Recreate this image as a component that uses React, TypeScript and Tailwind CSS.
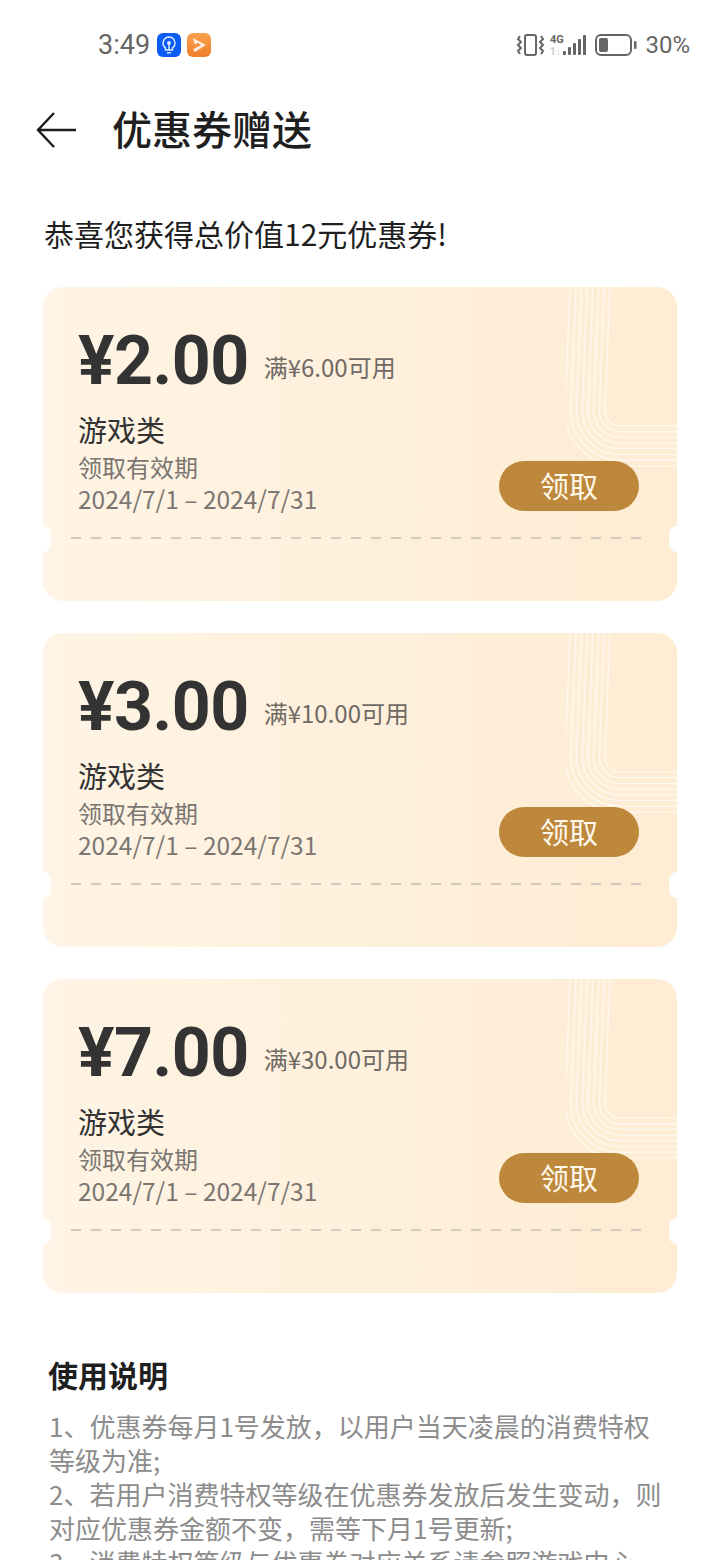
const coupons = [
  { amount: '¥2.00', limit: '满¥6.00可用' },
  { amount: '¥3.00', limit: '满¥10.00可用' },
  { amount: '¥7.00', limit: '满¥30.00可用' },
];

// concentric corner curves, innermost first
const curveRadii = [15, 20.7, 26.4, 32.1, 37.8, 43.5, 49.2, 55];

function CouponLines() {
  return (
    <svg className="absolute right-0 top-0" width="111" height="185" viewBox="0 0 111 185" fill="none">
      {curveRadii.map((r) => {
        const x = 54 - r;
        const hy = 124 + r;
        return (
          <path
            key={r}
            d={`M${x + 5} 0 L${x} 124 A${r} ${r} 0 0 0 54 ${hy} L111 ${hy}`}
            stroke="#fffaf2"
            strokeWidth="1.2"
          />
        );
      })}
    </svg>
  );
}

function Notch({ side }: { side: 'left' | 'right' }) {
  return (
    <div
      className={
        side === 'left'
          ? 'absolute left-0 top-[239px] h-[26px] w-[8px] rounded-r-[8px] bg-white'
          : 'absolute right-0 top-[239px] h-[26px] w-[8px] rounded-l-[8px] bg-white'
      }
    />
  );
}

function CouponCard({ amount, limit }: { amount: string; limit: string }) {
  return (
    <div className="relative h-[314px] overflow-hidden rounded-[20px] bg-gradient-to-r from-[#fff4e5] to-[#feecd3]">
      <CouponLines />
      <Notch side="left" />
      <Notch side="right" />
      <div className="relative flex flex-col px-[35px] pt-[36px]">
        <div className="flex items-center gap-[15px]">
          <span className="font-['Roboto',sans-serif] text-[68px] font-bold leading-[76px] tracking-[-0.5px] text-[#333333]">{amount}</span>
          <span className="mt-[11px] text-[24px] leading-[32px] text-[#6f6a65]">{limit}</span>
        </div>
        <div className="mt-[10px] text-[29px] leading-[40px] text-[#333333]">游戏类</div>
        <div className="relative mt-[2px]">
          <div className="flex flex-col">
            <span className="text-[24px] leading-[32px] text-[#7b7671]">领取有效期</span>
            <span className="text-[24.5px] leading-[32px] text-[#7b7671]">2024/7/1 – 2024/7/31</span>
          </div>
          <button className="absolute right-[3px] top-[10px] h-[50px] w-[140px] rounded-full bg-[#bd883b] text-[29px] text-[#fff8ec]">领取</button>
        </div>
        <div className="ml-[-7px] mr-[1px] mt-[22px] h-[2px] bg-[repeating-linear-gradient(90deg,#d3c9ba_0_10px,transparent_10px_20px)]" />
      </div>
    </div>
  );
}

export default function App() {
  return (
    <div className="h-[1560px] w-[720px] overflow-hidden bg-white font-['Noto_Sans_CJK_SC',sans-serif]">
      {/* status bar */}
      <div className="flex h-[90px] items-center justify-between pl-[98px] pr-[30px]">
        <div className="flex items-center">
          <span className="font-['Roboto',sans-serif] text-[27px] text-[#666666]">3:49</span>
          <div className="ml-[7px] flex h-[24px] w-[24px] items-center justify-center rounded-[6px] bg-[#0a5cf5]">
            <svg width="18" height="20" viewBox="0 0 18 20" fill="none" stroke="#dbe8ff" strokeWidth="1.5">
              <path d="M9 2a6 6 0 0 0-3.5 10.8V15h7v-2.2A6 6 0 0 0 9 2z" />
              <path d="M7 17.8h4" />
              <circle cx="9" cy="8" r="1.2" fill="#dbe8ff" />
              <path d="M9 9v6" />
            </svg>
          </div>
          <div className="ml-[6px] flex h-[24px] w-[24px] items-center justify-center rounded-[6px] bg-gradient-to-b from-[#f9a04e] to-[#f07f2a]">
            <svg width="18" height="18" viewBox="0 0 18 18" fill="#ffeadb">
              <path d="M3 2l13 7-11 7-2-2.5 7-4.5-6-1.5z" />
              <path d="M7 6.5l4 2.5-4 2z" fill="#f38a34" />
            </svg>
          </div>
        </div>
        <div className="flex items-center text-[#666666]">
          <svg width="30" height="24" viewBox="0 0 30 24" fill="none" stroke="#666666" strokeWidth="2">
            <rect x="9" y="2" width="11" height="20" rx="2" />
            <path d="M4 3L2 6l3 3-3 3 3 3-3 3 2 3M25 3l2 3-3 3 3 3-3 3 3 3-2 3" />
          </svg>
          <svg className="ml-[3px]" width="40" height="24" viewBox="0 0 40 24" fill="#666666">
            <text x="1" y="10" fontSize="11" fontWeight="700" fontFamily="Roboto, sans-serif">4G</text>
            <text x="1" y="22" fontSize="10" fontWeight="700" fontFamily="Roboto, sans-serif" fill="#cccccc">1↓</text>
            <rect x="14" y="18" width="3" height="4" rx="1" />
            <rect x="19" y="14" width="3" height="8" rx="1" />
            <rect x="24" y="10" width="3" height="12" rx="1" />
            <rect x="29" y="6" width="3" height="16" rx="1" />
            <rect x="34" y="2" width="3" height="20" rx="1" />
          </svg>
          <svg className="ml-[6px]" width="42" height="24" viewBox="0 0 42 24" fill="none">
            <rect x="1" y="2" width="35" height="20" rx="5" stroke="#666666" strokeWidth="2" />
            <rect x="4" y="5" width="9" height="14" rx="2" fill="#666666" />
            <rect x="39" y="8" width="2.5" height="8" rx="1" fill="#666666" />
          </svg>
          <span className="ml-[8px] font-['Roboto',sans-serif] text-[24px]">30%</span>
        </div>
      </div>

      {/* header */}
      <div className="flex h-[80px] items-center pl-[36px]">
        <svg width="40" height="38" viewBox="0 0 40 38" fill="none" stroke="#1c1c1c" strokeWidth="2.4">
          <path d="M18 2L2 19l16 17M2 19h38" />
        </svg>
        <h1 className="mb-[4px] ml-[36px] text-[40px] font-medium text-[#1f1f1f]">优惠券赠送</h1>
      </div>

      <p className="mt-[41px] pl-[44px] text-[30px] leading-[44px] text-[#1f1f1f]">恭喜您获得总价值12元优惠券!</p>

      <div className="mx-[43px] mt-[32px] flex flex-col gap-[32px]">
        {coupons.map((c) => (
          <CouponCard key={c.amount} amount={c.amount} limit={c.limit} />
        ))}
      </div>

      <div className="mt-[56px] px-[48px]">
        <h2 className="text-[30px] font-bold leading-[50px] text-[#1f1f1f]">使用说明</h2>
        <p className="ml-[1px] mt-[10px] text-[26px] leading-[34px] text-[#8c8c8c]">
          1、优惠券每月1号发放，以用户当天凌晨的消费特权等级为准;
          <br />
          2、若用户消费特权等级在优惠券发放后发生变动，则对应优惠券金额不变，需等下月1号更新;
          <br />
          3、消费特权等级与优惠券对应关系请参照游戏中心
        </p>
      </div>
    </div>
  );
}
